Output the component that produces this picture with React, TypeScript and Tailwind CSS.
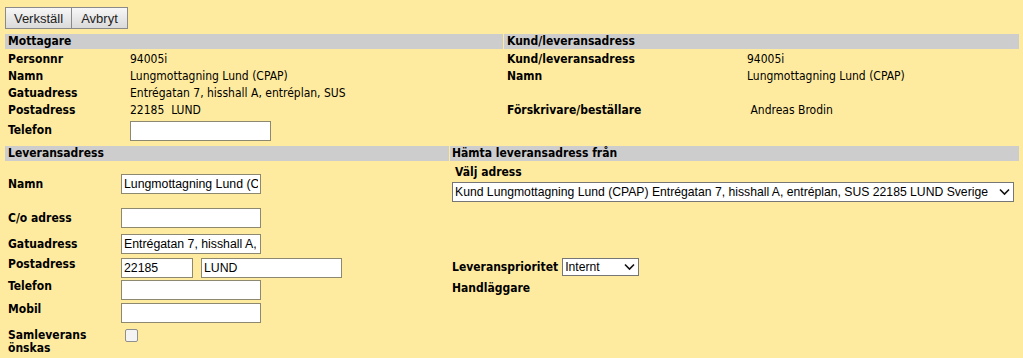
import React from "react";

const label = "font-bold";
const inputCls =
  "h-[20px] border border-[#8d8870] bg-white px-[2px] text-[12.3px] font-[family-name:Liberation_Sans,Arial,sans-serif] text-black outline-none";
const selectCls =
  "w-full appearance-none border border-[#767676] bg-white pl-[2px] pr-[18px] font-[family-name:Liberation_Sans,Arial,sans-serif] text-[12.2px] text-black outline-none";

function Chevron() {
  return (
    <svg
      className="pointer-events-none absolute right-[4px] top-1/2 -translate-y-1/2"
      width="11"
      height="7"
      viewBox="0 0 11 7"
    >
      <path d="M1 1l4.5 4.5L10 1" fill="none" stroke="#111" strokeWidth="1.6" />
    </svg>
  );
}

function InfoRow({ l, v, w }: { l: string; v?: string; w: string }) {
  return (
    <div className="flex h-[17px] items-center">
      <div className={`${w} shrink-0 pl-[3px] ${label}`}>{l}</div>
      <div className="whitespace-pre">{v}</div>
    </div>
  );
}

export default function App() {
  return (
    <div className="h-[358px] w-[1023px] overflow-hidden bg-[#ffeba0] pl-[5px] pt-[7px] font-[family-name:DejaVu_Sans_Condensed,DejaVu_Sans,sans-serif] text-[12px] leading-[15px] text-black">
      <div className="flex h-[22px] font-[family-name:Liberation_Sans,Arial,sans-serif] text-[13px] text-[#222]">
        <button className="w-[67px] border border-[#8a8a8a] bg-gradient-to-b from-[#f7f7f7] to-[#dadada]">
          Verkställ
        </button>
        <button className="w-[56px] border border-l-0 border-[#8a8a8a] bg-gradient-to-b from-[#f7f7f7] to-[#dadada]">
          Avbryt
        </button>
      </div>

      <div className="mt-[5px] flex w-[1014px] gap-px">
        <div className="w-[498px]">
          <div className="h-[15px] bg-[#cdcdcd] pl-[3px] font-bold">Mottagare</div>
          <div className="mt-[2px]">
            <InfoRow w="w-[125px]" l="Personnr" v="94005i" />
            <InfoRow w="w-[125px]" l="Namn" v="Lungmottagning Lund (CPAP)" />
            <InfoRow w="w-[125px]" l="Gatuadress" v="Entrégatan 7, hisshall A, entréplan, SUS" />
            <InfoRow w="w-[125px]" l="Postadress" v="22185  LUND" />
            <div className="flex h-[23px] items-center">
              <div className={`w-[125px] shrink-0 pl-[3px] ${label}`}>Telefon</div>
              <input className={`${inputCls} w-[141px]`} />
            </div>
          </div>
        </div>
        <div className="flex-1">
          <div className="h-[15px] bg-[#cdcdcd] pl-[3px] font-bold">Kund/leveransadress</div>
          <div className="mt-[2px]">
            <InfoRow w="w-[243px]" l="Kund/leveransadress" v="94005i" />
            <InfoRow w="w-[243px]" l="Namn" v="Lungmottagning Lund (CPAP)" />
            <div className="h-[17px]" />
            <InfoRow w="w-[243px]" l="Förskrivare/beställare" v=" Andreas Brodin" />
          </div>
        </div>
      </div>

      <div className="mt-[4px] flex w-[1014px] gap-px">
        <div className="w-[444px]">
          <div className="h-[15px] bg-[#cdcdcd] pl-[3px] font-bold">Leveransadress</div>
          <div className="mt-[2px]">
            <div className="flex h-[42px] items-center">
              <div className={`w-[116px] shrink-0 pl-[3px] ${label}`}>Namn</div>
              <input className={`${inputCls} w-[140px]`} defaultValue="Lungmottagning Lund (CPAP)" />
            </div>
            <div className="flex h-[26px] items-center">
              <div className={`w-[116px] shrink-0 pl-[3px] ${label}`}>C/o adress</div>
              <input className={`${inputCls} w-[140px]`} />
            </div>
            <div className="flex h-[26px] items-center">
              <div className={`w-[116px] shrink-0 pl-[3px] pt-px ${label}`}>Gatuadress</div>
              <input className={`${inputCls} w-[140px]`} defaultValue="Entrégatan 7, hisshall A, entréplan, SUS" />
            </div>
            <div className="flex h-[22px] items-start">
              <div className={`w-[116px] shrink-0 pl-[3px] ${label}`}>Postadress</div>
              <input className={`${inputCls} mt-px h-[19px] w-[72px]`} defaultValue="22185" />
              <input className={`${inputCls} ml-[8px] mt-px h-[19px] w-[141px]`} defaultValue="LUND" />
            </div>
            <div className="flex h-[23px] items-start">
              <div className={`w-[116px] shrink-0 pl-[3px] ${label}`}>Telefon</div>
              <input className={`${inputCls} mt-px h-[19px] w-[140px]`} />
            </div>
            <div className="flex h-[23px] items-start">
              <div className={`w-[116px] shrink-0 pl-[3px] ${label}`}>Mobil</div>
              <input className={`${inputCls} mt-px h-[19px] w-[140px]`} />
            </div>
            <div className="flex items-start">
              <div className={`w-[116px] shrink-0 pl-[3px] pt-[4px] leading-[13px] ${label}`}>
                Samleverans
                <br />
                önskas
              </div>
              <div className="ml-[4px] mt-[4px] h-[13px] w-[13px] rounded-[2px] border border-[#8f8f8f] bg-[#f4f4f4]" />
            </div>
          </div>
        </div>

        <div className="flex-1">
          <div className="h-[15px] bg-[#cdcdcd] pl-[2px] font-bold">Hämta leveransadress från</div>
          <div className="pl-[2px]">
            <div className="mt-[4px] pl-[3px] font-bold">Välj adress</div>
            <div className="relative mt-[2px] w-[562px]">
              <select className={`${selectCls} h-[20px]`}>
                <option>
                  Kund Lungmottagning Lund (CPAP) Entrégatan 7, hisshall A, entréplan, SUS 22185 LUND Sverige
                </option>
              </select>
              <Chevron />
            </div>
            <div className="mt-[56px] flex h-[18px] items-center gap-[4px]">
              <div className={label}>Leveransprioritet</div>
              <div className="relative w-[77px]">
                <select className={`${selectCls} h-[18px]`}>
                  <option>Internt</option>
                </select>
                <Chevron />
              </div>
            </div>
            <div className={`mt-[5px] ${label}`}>Handläggare</div>
          </div>
        </div>
      </div>
    </div>
  );
}
